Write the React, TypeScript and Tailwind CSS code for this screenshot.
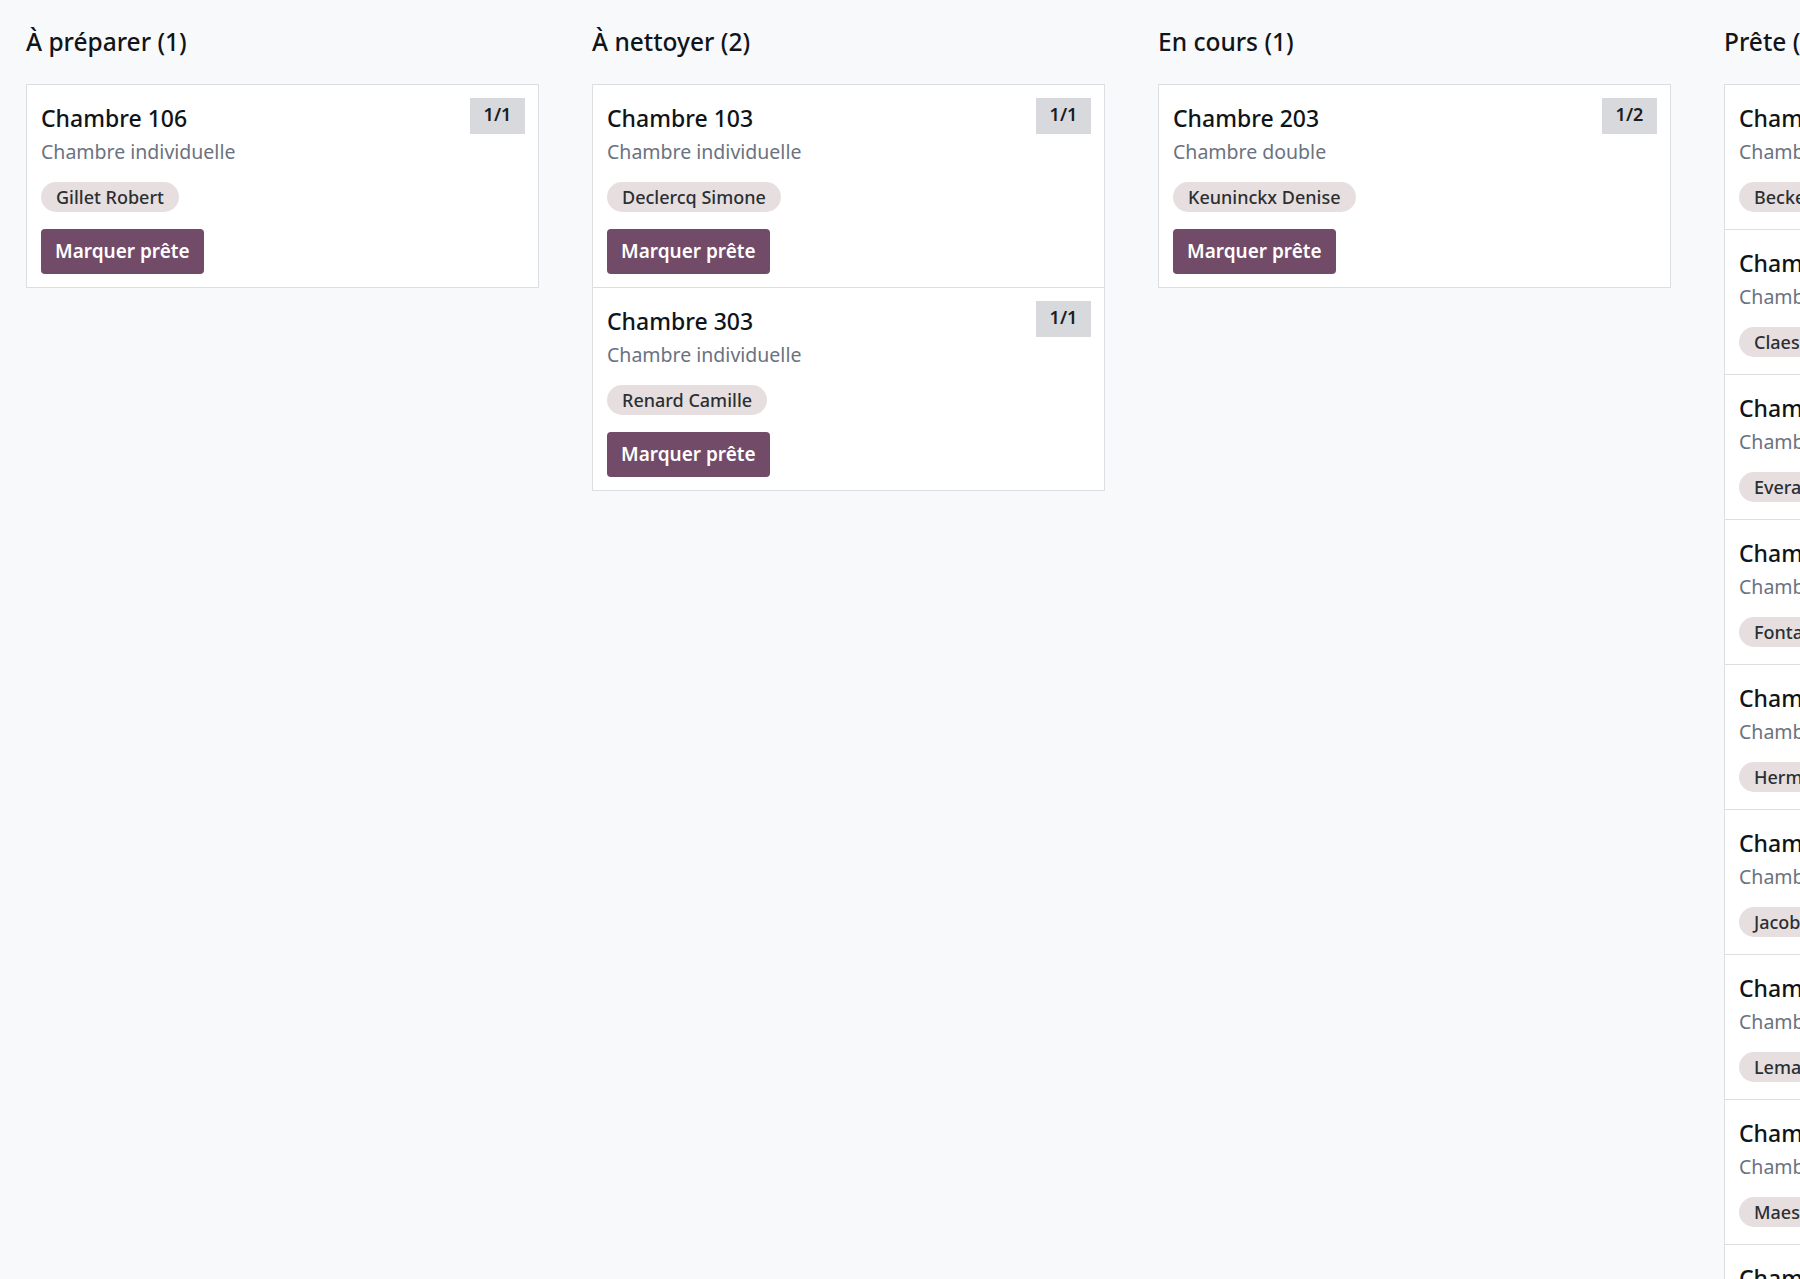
import React from 'react';

type Room = {
    id: number;
    name: string;
    kind: string;
    guest: string;
    beds?: string;
};

type Column = {
    title: string;
    rooms: Room[];
    canMark: boolean;
};

const columns: Column[] = [
    {
        title: "À préparer",
        canMark: true,
        rooms: [
            {id: 106, name: "Chambre 106", kind: "Chambre individuelle", guest: "Gillet Robert", beds: "1/1"},
        ],
    },
    {
        title: "À nettoyer",
        canMark: true,
        rooms: [
            {id: 103, name: "Chambre 103", kind: "Chambre individuelle", guest: "Declercq Simone", beds: "1/1"},
            {id: 303, name: "Chambre 303", kind: "Chambre individuelle", guest: "Renard Camille", beds: "1/1"},
        ],
    },
    {
        title: "En cours",
        canMark: true,
        rooms: [
            {id: 203, name: "Chambre 203", kind: "Chambre double", guest: "Keuninckx Denise", beds: "1/2"},
        ],
    },
    {
        title: "Prête",
        canMark: false,
        rooms: [
            {id: 101, name: "Chambre 101", kind: "Chambre individuelle", guest: "Becker Paul"},
            {id: 102, name: "Chambre 102", kind: "Chambre individuelle", guest: "Claes Marie"},
            {id: 104, name: "Chambre 104", kind: "Chambre individuelle", guest: "Everaert Jean"},
            {id: 105, name: "Chambre 105", kind: "Chambre individuelle", guest: "Fontaine Lucie"},
            {id: 201, name: "Chambre 201", kind: "Chambre double", guest: "Hermans Luc"},
            {id: 202, name: "Chambre 202", kind: "Chambre double", guest: "Jacobs Anne"},
            {id: 204, name: "Chambre 204", kind: "Chambre double", guest: "Lemaire Marc"},
            {id: 301, name: "Chambre 301", kind: "Chambre individuelle", guest: "Maes Sophie"},
            {id: 302, name: "Chambre 302", kind: "Chambre individuelle", guest: "Martin Louis"},
            {id: 304, name: "Chambre 304", kind: "Chambre individuelle", guest: "Peeters Anna"},
        ],
    },
];

const RoomCard = ({room, canMark}: { room: Room; canMark: boolean }) => (
    <div className={`relative px-[14px] pt-[14px] ${canMark ? "pb-[13px]" : "pb-[17px]"}`}>
        {room.beds && (
            <span
                className="absolute right-[13px] top-[13px] flex h-[36px] w-[55px] justify-center bg-[#d8d9dc] pt-[4px] text-[18px] font-semibold leading-[24px] text-[#1a1d21]">
                {room.beds}
            </span>
        )}
        <h3 className="mt-[2px] text-[23px] font-medium leading-[34px] text-[#0f1419]">{room.name}</h3>
        <p className="mt-[3px] text-[19.5px] leading-[28px] text-[#6b7280]">{room.kind}</p>
        <div className="mt-[16px] flex">
            <span
                className="flex h-[30px] items-center rounded-full bg-[#e7dfdf] px-[15px] text-[18px] font-medium text-[#2b2f33]">
                {room.guest}
            </span>
        </div>
        {canMark && (
            <button
                className="mt-[17px] flex h-[45px] items-center rounded-[4px] bg-[#714b67] px-[14px] text-[19px] font-semibold text-white">
                Marquer prête
            </button>
        )}
    </div>
);

export default function App() {
    return (
        <main
            className="flex h-screen w-full gap-[53px] overflow-hidden bg-[#f8f9fa] px-[26px] pt-[24px] font-['Noto_Sans',sans-serif]">
            {columns.map((col) => (
                <section key={col.title} className="w-[513px] shrink-0">
                    <h2 className="text-[24.5px] font-medium leading-[36px] text-[#111418]">
                        {col.title} ({col.rooms.length})
                    </h2>
                    <div className="mt-[24px] divide-y divide-[#dcdee1] border border-[#dcdee1] bg-white">
                        {col.rooms.map((room) => (
                            <RoomCard key={room.id} room={room} canMark={col.canMark}/>
                        ))}
                    </div>
                </section>
            ))}
        </main>
    );
}
